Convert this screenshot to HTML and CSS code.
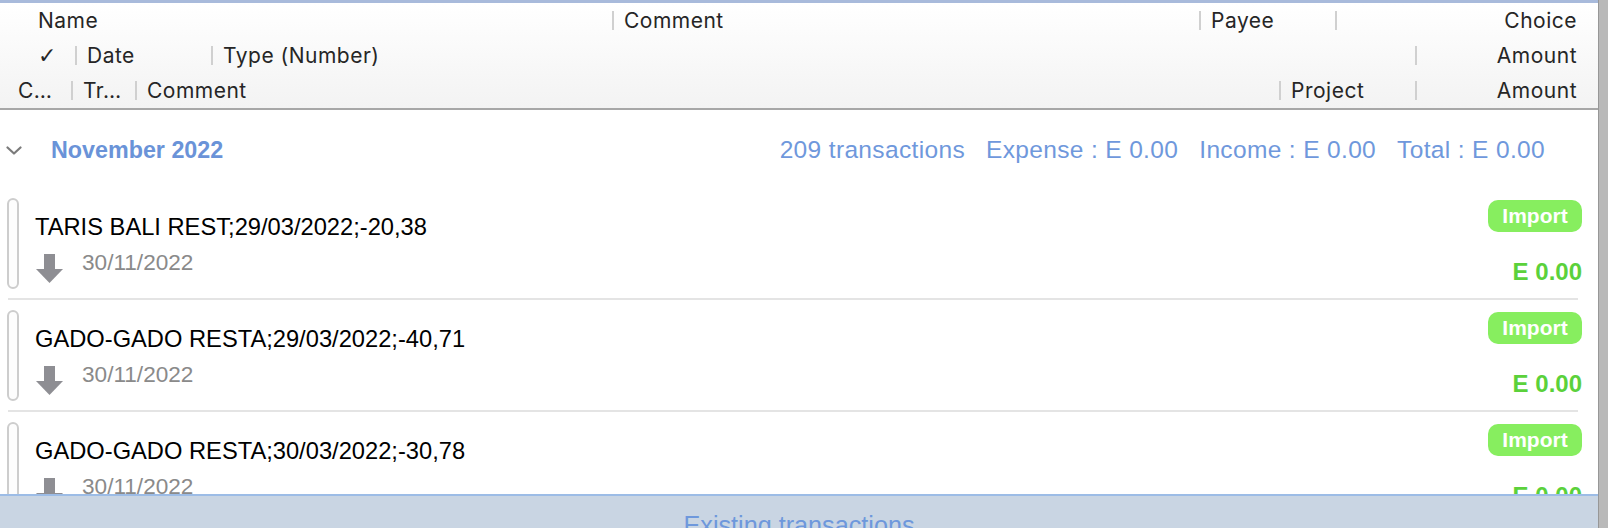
FILE: index.html
```html
<!DOCTYPE html>
<html lang="en">
<head>
  <meta charset="UTF-8" />
  <meta name="viewport" content="width=device-width, initial-scale=1" />
  <title>Import transactions</title>
  <link rel="stylesheet" href="styles.css">
</head>
<body>

<div class="app">
  <div class="columns">
    <div class="col-row">
      <div class="cell c-name">Name</div>
      <div class="cell c-comment"><span class="sep"></span>Comment</div>
      <div class="cell c-payee"><span class="sep"></span>Payee</div>
      <div class="cell c-last"><span class="sep"></span><span class="right">Choice</span></div>
    </div>
    <div class="col-row">
      <div class="cell c-check">&#10003;</div>
      <div class="cell c-date"><span class="sep"></span>Date</div>
      <div class="cell c-type"><span class="sep"></span>Type (Number)</div>
      <div class="cell c-last"><span class="sep"></span><span class="right">Amount</span></div>
    </div>
    <div class="col-row">
      <div class="cell c-cat">C&hellip;</div>
      <div class="cell c-tr"><span class="sep"></span>Tr&hellip;</div>
      <div class="cell c-note"><span class="sep"></span>Comment</div>
      <div class="cell c-project"><span class="sep"></span>Project</div>
      <div class="cell c-last"><span class="sep"></span><span class="right">Amount</span></div>
    </div>
  </div>

  <div class="list">
    <div class="group">
      <svg class="chevron" width="16" height="9" viewBox="0 0 16 9">
        <polyline points="1.5,1.5 8,7.5 14.5,1.5" fill="none" stroke="#7b7b7b" stroke-width="2.2" stroke-linecap="round" stroke-linejoin="round"/>
      </svg>
      <span class="month">November 2022</span>
      <div class="totals">
        <span>209 transactions</span>
        <span>Expense : E 0.00</span>
        <span>Income : E 0.00</span>
        <span>Total : E 0.00</span>
      </div>
    </div>

    <div class="txn">
      <div class="pill"></div>
      <div class="info">
        <div class="memo">TARIS BALI REST;29/03/2022;-20,38</div>
        <div class="sub">
          <svg class="arrow" width="27" height="29" viewBox="0 0 27 29"><rect x="8" y="0" width="11" height="16" fill="#8e8e93"/><polygon points="0,15 27,15 13.5,29" fill="#8e8e93"/></svg>
          <span class="date">30/11/2022</span>
        </div>
      </div>
      <div class="side">
        <span class="badge">Import</span>
        <span class="amount">E 0.00</span>
      </div>
    </div>
    <div class="divider"></div>

    <div class="txn">
      <div class="pill"></div>
      <div class="info">
        <div class="memo">GADO-GADO RESTA;29/03/2022;-40,71</div>
        <div class="sub">
          <svg class="arrow" width="27" height="29" viewBox="0 0 27 29"><rect x="8" y="0" width="11" height="16" fill="#8e8e93"/><polygon points="0,15 27,15 13.5,29" fill="#8e8e93"/></svg>
          <span class="date">30/11/2022</span>
        </div>
      </div>
      <div class="side">
        <span class="badge">Import</span>
        <span class="amount">E 0.00</span>
      </div>
    </div>
    <div class="divider"></div>

    <div class="txn">
      <div class="pill"></div>
      <div class="info">
        <div class="memo">GADO-GADO RESTA;30/03/2022;-30,78</div>
        <div class="sub">
          <svg class="arrow" width="27" height="29" viewBox="0 0 27 29"><rect x="8" y="0" width="11" height="16" fill="#8e8e93"/><polygon points="0,15 27,15 13.5,29" fill="#8e8e93"/></svg>
          <span class="date">30/11/2022</span>
        </div>
      </div>
      <div class="side">
        <span class="badge">Import</span>
        <span class="amount">E 0.00</span>
      </div>
    </div>
    <div class="divider"></div>
  </div>

  <div class="existing">Existing transactions</div>
</div>
<div class="edge"></div>

</body>
</html>
```

FILE: styles.css
```css
html, body {
  margin: 0;
  padding: 0;
}
body {
  display: flex;
  width: 1608px;
  height: 528px;
  overflow: hidden;
  background-color: #fff;
  font-family: "Liberation Sans", Arial, sans-serif;
}
.app {
  width: 1598px;
  height: 528px;
  display: flex;
  flex-direction: column;
}
.edge {
  flex: 1;
  background-color: #b9b9b9;
  border-left: 1px solid #979797;
}

/* column header */
.columns {
  height: 110px;
  box-sizing: border-box;
  border-top: 3px solid #a8badb;
  border-bottom: 2px solid #a7a7a7;
  background: linear-gradient(#ffffff, #f3f3f3);
  font-family: Inter, "DejaVu Sans", sans-serif;
  font-size: 21px;
  letter-spacing: 0.5px;
  color: #262626;
}
.col-row {
  display: flex;
  height: 35px;
  align-items: center;
}
.cell {
  display: flex;
  align-items: center;
  flex: none;
  white-space: nowrap;
}
.sep {
  width: 2px;
  height: 19px;
  background-color: #d0d0d0;
  margin-right: 10px;
}
.c-name { width: 612px; padding-left: 38px; box-sizing: border-box; }
.c-comment { width: 587px; }
.c-payee { width: 136px; }
.c-check { width: 75px; padding-left: 38px; box-sizing: border-box; font-family: "DejaVu Sans", sans-serif; font-size: 22px; }
.c-date { width: 136px; }
.c-type { width: 1204px; }
.c-cat { width: 71px; padding-left: 18px; box-sizing: border-box; }
.c-tr { width: 64px; }
.c-note { width: 1144px; }
.c-project { width: 136px; }
.c-last {
  flex: 1;
}
.right {
  margin-left: auto;
  padding-right: 21px;
}

/* list */
.list {
  flex: 1;
  min-height: 0;
  overflow: hidden;
}
.group {
  display: flex;
  align-items: center;
  height: 78px;
  box-sizing: border-box;
  padding: 2px 53px 0 6px;
}
.chevron {
  display: block;
}
.month {
  margin-left: 29px;
  font-size: 23.3px;
  font-weight: bold;
  color: #6a93d8;
}
.totals {
  margin-left: auto;
  display: flex;
  gap: 21px;
  font-size: 24.5px;
  letter-spacing: 0.35px;
  color: #6f98dc;
}

.txn {
  display: flex;
  margin: 0 16px 0 7px;
  padding: 10px 0 9px;
}
.pill {
  width: 12px;
  height: 91px;
  box-sizing: border-box;
  border: 2px solid #cdcdcd;
  border-radius: 6px;
  background-color: #fdfdfd;
}
.info {
  margin-left: 16px;
}
.memo {
  margin-top: 16px;
  font-size: 23.7px;
  line-height: 26px;
  color: #000;
}
.sub {
  display: flex;
  align-items: flex-start;
  margin-top: 10px;
}
.arrow {
  display: block;
  margin: 4px 0 0 1px;
}
.date {
  margin-left: 19px;
  font-size: 22.6px;
  line-height: 26px;
  color: #8a8a8a;
}
.side {
  margin-left: auto;
  display: flex;
  flex-direction: column;
  align-items: flex-end;
}
.badge {
  margin-top: 2px;
  width: 94px;
  height: 32px;
  line-height: 32px;
  border-radius: 10px;
  background-color: #87ee5f;
  color: #fff;
  font-weight: bold;
  font-size: 21px;
  text-align: center;
}
.amount {
  margin-top: 26px;
  font-weight: bold;
  font-size: 24px;
  line-height: 28px;
  color: #5bd13b;
}
.divider {
  height: 2px;
  margin: 0 20px 0 8px;
  background-color: #e4e4e4;
}

/* bottom panel */
.existing {
  height: 34px;
  box-sizing: border-box;
  overflow: hidden;
  border-top: 2px solid #9cbce6;
  background-color: #c9d5e3;
  padding-top: 15px;
  text-align: center;
  font-size: 25.2px;
  line-height: 28px;
  color: #6e98dc;
}
```
